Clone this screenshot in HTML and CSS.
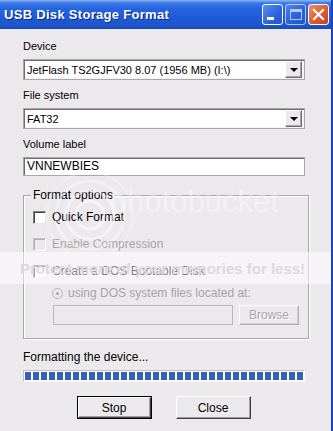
FILE: index.html
```html
<!DOCTYPE html>
<html lang="en">
<head>
  <meta charset="UTF-8" />
  <title>USB Disk Storage Format</title>
  <link rel="stylesheet" href="styles.css">
</head>
<body>
  <div class="window">
    <div class="titlebar">
      <span class="title">USB Disk Storage Format</span>
      <div class="controls">
        <span class="ctl min"><i></i></span>
        <span class="ctl max disabled"><i></i></span>
        <span class="ctl close">
          <svg width="13" height="13" viewBox="0 0 13 13"><path d="M2 2 L11 11 M11 2 L2 11" stroke="#fff" stroke-width="2.2" stroke-linecap="square"/></svg>
        </span>
      </div>
    </div>

    <div class="content">
      <div class="label first">Device</div>
      <div class="combo">
        <span class="value">JetFlash TS2GJFV30 8.07 (1956 MB) (I:\)</span>
        <span class="drop"><i></i></span>
      </div>

      <div class="label">File system</div>
      <div class="combo">
        <span class="value">FAT32</span>
        <span class="drop"><i></i></span>
      </div>

      <div class="label">Volume label</div>
      <div class="textbox">VNNEWBIES</div>

      <fieldset class="group">
        <legend>Format options</legend>
        <div class="check-row">
          <span class="checkbox"></span>
          <span>Quick Format</span>
        </div>
        <div class="check-row disabled">
          <span class="checkbox"></span>
          <span>Enable Compression</span>
        </div>
        <div class="check-row">
          <span class="checkbox"></span>
          <span>Create a DOS Bootable Disk</span>
        </div>
        <div class="radio-row disabled">
          <span class="radio"><i></i></span>
          <span>using DOS system files located at:</span>
        </div>
        <div class="path-row">
          <div class="textbox off"></div>
          <button class="btn browse" disabled>Browse</button>
        </div>
      </fieldset>

      <div class="label status">Formatting the device...</div>
      <div class="progress"><div class="bar"></div></div>

      <div class="actions">
        <button class="btn default">Stop</button>
        <button class="btn">Close</button>
      </div>
    </div>

    <!-- photobucket watermark over the screenshot -->
    <div class="wm-logo">
      <svg width="90" height="90" viewBox="0 0 90 90">
        <circle cx="45" cy="45" r="14" fill="none" stroke="#fff" stroke-width="3" opacity="0.5"/>
        <circle cx="45" cy="45" r="24" fill="none" stroke="#fff" stroke-width="3" opacity="0.45"/>
        <circle cx="45" cy="45" r="34" fill="none" stroke="#fff" stroke-width="3" opacity="0.35"/>
        <circle cx="45" cy="45" r="43" fill="none" stroke="#fff" stroke-width="2" opacity="0.25"/>
      </svg>
    </div>
    <div class="wm-text">photobucket</div>
    <div class="wm-band"><span>Protect more of your memories for less!</span></div>
  </div>
</body>
</html>
```

FILE: styles.css
```css
* {
  box-sizing: border-box;
}

body {
  margin: 0;
  background: #ece9ec;
  font-family: 'Liberation Sans', Arial, sans-serif;
  font-size: 11px;
  color: #000;
}

.window {
  position: relative;
  width: 333px;
  height: 431px;
  background: #ece9ec;
  border-right: 2px solid #1b45c0;
  overflow: hidden;
}

.titlebar {
  height: 29px;
  display: flex;
  align-items: center;
  justify-content: space-between;
  padding: 0 2px 0 4px;
  background: linear-gradient(to bottom, #8fb4f2 0px, #3b7ae8 3px, #2665e0 8px, #1f5ad6 18px, #1c54cc 26px, #1a47b0 29px);
}

.title {
  color: #fff;
  font-weight: bold;
  font-size: 13px;
  text-shadow: 1px 1px 0 #0c2a8a;
  letter-spacing: 0.3px;
}

.controls {
  display: flex;
  gap: 2px;
}

.ctl {
  width: 21px;
  height: 21px;
  border: 1px solid #fff;
  border-radius: 3px;
  background: linear-gradient(135deg, #5c8ff0, #2d62dc 60%, #2556cc);
  display: flex;
  align-items: center;
  justify-content: center;
  position: relative;
}

.ctl.min i {
  position: absolute;
  left: 4px;
  bottom: 4px;
  width: 7px;
  height: 3px;
  background: #fff;
}

.ctl.max {
  opacity: 0.65;
}

.ctl.max i {
  width: 12px;
  height: 11px;
  border: 1px solid #fff;
  border-top-width: 3px;
}

.ctl.close {
  background: linear-gradient(135deg, #f0906a, #e0592e 55%, #c8401e);
}

.content {
  padding: 0 26px 0 23px;
  display: flex;
  flex-direction: column;
}

.label {
  height: 13px;
  line-height: 13px;
  margin-top: 9px;
  margin-bottom: 6px;
}

.label.first {
  margin-top: 11px;
}

.combo {
  height: 21px;
  background: #fff;
  border: 1px solid #a9a7a9;
  box-shadow: inset 1px 1px 0 #6f6f6f, inset -1px -1px 0 #f4f4f4;
  display: flex;
  align-items: center;
  justify-content: space-between;
  padding: 0 2px 0 3px;
}

.drop {
  width: 17px;
  height: 17px;
  background: #ece9ec;
  border: 1px solid #fff;
  border-right-color: #6e6e6e;
  border-bottom-color: #6e6e6e;
  box-shadow: inset -1px -1px 0 #a7a7a7;
  display: flex;
  align-items: center;
  justify-content: center;
}

.drop i {
  width: 0;
  height: 0;
  border-left: 4px solid transparent;
  border-right: 4px solid transparent;
  border-top: 4px solid #000;
}

.textbox {
  height: 19px;
  background: #fff;
  border: 1px solid #a9a7a9;
  box-shadow: inset 1px 1px 0 #6f6f6f;
  padding: 0 3px;
  line-height: 17px;
  font-size: 12px;
}

.textbox.off {
  background: #ece9ec;
  box-shadow: none;
  border-color: #b9b7b9;
}

.group {
  margin: 13px 0 0;
  padding: 8px 9px 0 9px;
  height: 150px;
  border: 1px solid #a9a7a9;
  box-shadow: inset 1px 1px 0 #fff, 1px 1px 0 #fff;
}

.group legend {
  padding: 0 2px;
  margin-left: -2px;
  line-height: 13px;
  font-size: 12px;
}

.check-row,
.radio-row {
  display: flex;
  align-items: center;
  gap: 6px;
  height: 14px;
  font-size: 12px;
  margin-bottom: 13px;
}

.check-row.disabled,
.radio-row.disabled {
  color: #a6a4a6;
}

.checkbox {
  width: 13px;
  height: 13px;
  background: #fff;
  border: 1px solid #808080;
  border-right-color: #e6e6e6;
  border-bottom-color: #e6e6e6;
  box-shadow: inset 1px 1px 0 #404040;
}

.check-row.disabled .checkbox {
  background: #ece9ec;
  box-shadow: inset 1px 1px 0 #b0b0b0;
  border-color: #c4c4c4 #fff #fff #c4c4c4;
}

.radio-row {
  padding-left: 19px;
  gap: 5px;
  margin-top: -5px;
  margin-bottom: 5px;
}

.radio {
  width: 11px;
  height: 11px;
  border-radius: 50%;
  border: 1px solid #b8b6b8;
  background: #ece9ec;
  display: flex;
  align-items: center;
  justify-content: center;
}

.radio i {
  width: 3px;
  height: 3px;
  border-radius: 50%;
  background: #a6a4a6;
}

.path-row {
  display: flex;
  gap: 6px;
  padding-left: 20px;
}

.path-row .textbox {
  width: 180px;
  height: 20px;
}

.btn {
  font-family: 'Liberation Sans', Arial, sans-serif;
  font-size: 12px;
  background: #ece9ec;
  color: #000;
  border: 1px solid #fff;
  border-right-color: #404040;
  border-bottom-color: #404040;
  box-shadow: inset -1px -1px 0 #a0a0a0;
  padding: 0;
}

.btn.browse {
  width: 60px;
  height: 20px;
  color: #a6a4a6;
  text-shadow: 1px 1px 0 #fff;
  border-color: #fff #b0b0b0 #b0b0b0 #fff;
  box-shadow: inset -1px -1px 0 #d0d0d0;
}

.label.status {
  margin-top: 12px;
  margin-bottom: 6px;
  font-size: 12px;
}

.progress {
  height: 12px;
  border: 1px solid #c0c0c0;
  border-right-color: #fff;
  border-bottom-color: #fff;
  background: #fff;
  padding: 1px 1px;
}

.progress .bar {
  height: 100%;
  background: repeating-linear-gradient(to right, #3461b4 0, #3461b4 6px, transparent 6px, transparent 8px);
}

.actions {
  display: flex;
  justify-content: center;
  align-items: center;
  gap: 25px;
  margin-top: 14px;
}

.actions .btn {
  width: 75px;
  height: 23px;
}

.actions .btn.default {
  width: 73px;
  height: 21px;
  outline: 1px solid #000;
  border-color: #fff #404040 #404040 #fff;
}

/* watermark */
.wm-logo {
  position: absolute;
  left: 45px;
  top: 170px;
  pointer-events: none;
}

.wm-text {
  position: absolute;
  left: 110px;
  top: 184px;
  font-family: 'Liberation Sans', Arial, sans-serif;
  font-size: 31px;
  color: #fff;
  opacity: 0.4;
  pointer-events: none;
}

.wm-band {
  position: absolute;
  left: 0;
  right: 0;
  top: 252px;
  height: 32px;
  background: rgba(255, 255, 255, 0.5);
  pointer-events: none;
  display: flex;
  align-items: center;
  padding-left: 20px;
  white-space: nowrap;
}

.wm-band span {
  font-family: 'Liberation Sans', Arial, sans-serif;
  font-weight: bold;
  font-size: 15px;
  color: #dcdadc;
}
```
